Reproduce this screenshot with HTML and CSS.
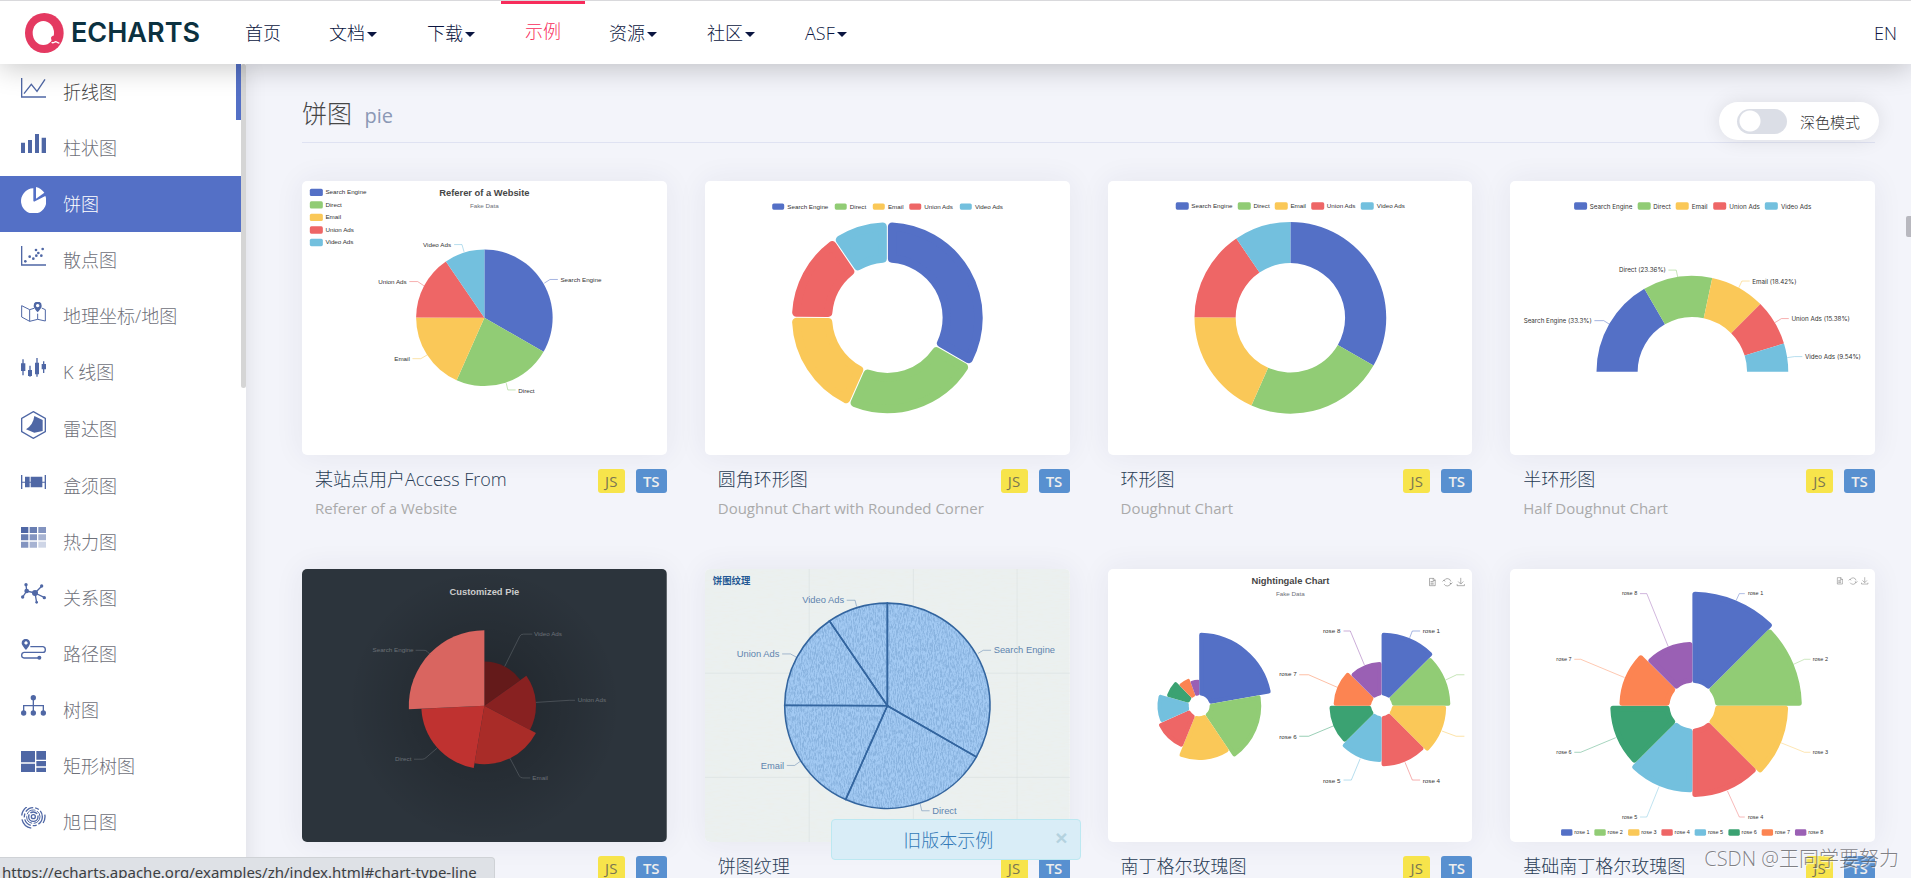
FILE: index.html
```html
<!DOCTYPE html>
<html lang="zh">
<head>
<meta charset="utf-8">
<title>Examples - Apache ECharts</title>
<link rel="stylesheet" href="styles.css">
</head>
<body>
<header class="topbar">
  <a class="logo" href="#" aria-label="ECharts">
    <svg class="logo-mark" viewBox="0 0 117 120" aria-hidden="true">
      <ellipse cx="58" cy="60" rx="58" ry="60" fill="#e43961"/>
      <ellipse cx="55" cy="60" rx="32" ry="36" fill="#fff"/>
      <path d="M78 74c4-8 12-7 15 0 1 4-1 6 3 7 5 1 6 4 10 6l-3 4c-5-4-9 1-14-3-5-3-10-2-11-14z" fill="#e43961"/>
      <path d="M80 88c4 4 8-1 12-2 4 0 5 4 11 4" fill="none" stroke="#fff" stroke-width="4"/>
      <circle cx="86" cy="78" r="5" fill="#e43961"/>
    </svg>
    <span class="logo-text">ECHARTS</span>
  </a>
  <nav class="menu">
    <a href="#">首页</a>
    <a href="#">文档<i class="caret"></i></a>
    <a href="#">下载<i class="caret"></i></a>
    <a href="#" class="active">示例</a>
    <a href="#">资源<i class="caret"></i></a>
    <a href="#">社区<i class="caret"></i></a>
    <a href="#">ASF<i class="caret"></i></a>
  </nav>
  <a class="lang" href="#">EN</a>
</header>

<div class="layout">
  <aside class="sidebar">
    <nav class="chart-types">
      <a class="hovered" href="#chart-type-line"><svg viewBox="0 0 75 60"><path d="M2 0v57h73M9 47l22-28 17 21L72 4" class="ln"/></svg>折线图</a>
      <a href="#chart-type-bar"><svg viewBox="0 0 75 58"><path d="M0 26h12v32H0zM21 18h12v40H21zM42 0h12v58H42zM62 11h13v47H62z"/></svg>柱状图</a>
      <a class="current" href="#chart-type-pie"><svg viewBox="0 0 75 78"><path d="M37 4v37l2 3 34-17a38 38 0 1 1-36-23z"/><path d="M45 0v35l25-18Q60 4 45 0z"/></svg>饼图</a>
      <a href="#chart-type-scatter"><svg viewBox="0 0 75 60"><path d="M2 0v57h73" class="ln"/><circle cx="13" cy="46" r="4"/><circle cx="26" cy="32" r="4"/><circle cx="37" cy="38" r="4"/><circle cx="45" cy="12" r="4"/><circle cx="52" cy="21" r="4"/><circle cx="46" cy="29" r="4"/><circle cx="61" cy="29" r="4"/><circle cx="65" cy="9" r="4"/></svg>散点图</a>
      <a href="#chart-type-geo"><svg viewBox="0 0 75 60"><path d="M39 19L26 23 2 11v34l24 13 24-6 23 5V23l-11-5M26 23v35M50 35v17" class="ln thin"/><path fill-rule="evenodd" d="M50 31C39 19 38 14 38 11a12 12 0 0 1 24 0c0 3-1 8-12 20zM50 6a5 5 0 1 0 .1 0z"/></svg>地理坐标/地图</a>
      <a href="#chart-type-candlestick"><svg viewBox="0 0 75 56"><path d="M0 16h13v23H0zM21 36h12v18H21zM42 14h12v35H42zM62 18h13v16H62z"/><path d="M6 4v48M27 23v33M48 0v56M68 10v35" class="ln"/></svg>K 线图</a>
      <a class="tall" href="#chart-type-radar"><svg viewBox="0 0 75 84"><path d="M37 2l36 20v40L37 82 2 62V22z" class="ln"/><path d="M40 15l25 12v33l-25 5-25-10q22-14 25-40z"/></svg>雷达图</a>
      <a href="#chart-type-boxplot"><svg viewBox="0 0 75 42"><path d="M0 0h4v42H0zM71 0h4v42h-4zM12 5h14v32H12zM29 5h35v32H29zM0 20h75v3H0z"/></svg>盒须图</a>
      <a href="#chart-type-heatmap"><svg viewBox="0 0 75 63"><path d="M0 0h22v18H0z"/><path d="M26 0h22v18H26zM0 22h22v18H0z" opacity=".85"/><path d="M52 0h23v18H52zM26 22h22v18H26zM0 44h22v18H0z" opacity=".7"/><path d="M52 22h23v18H52zM26 44h22v18H26z" opacity=".5"/><path d="M52 44h23v18H52z" opacity=".28"/></svg>热力图</a>
      <a href="#chart-type-graph"><svg viewBox="0 0 75 63"><path d="M5 42l12-18-2-20M17 24l25 6 20-20M42 30l29 14M42 30l5 29" class="ln"/><circle cx="17" cy="24" r="7"/><circle cx="42" cy="30" r="9"/><circle cx="5" cy="42" r="5"/><circle cx="15" cy="5" r="5"/><circle cx="62" cy="9" r="5"/><circle cx="70" cy="44" r="5"/><circle cx="47" cy="58" r="4"/></svg>关系图</a>
      <a href="#chart-type-lines"><svg viewBox="0 0 75 63"><path d="M28 23h38q7 1 7 9t-7 8H9q-7 1-7 9t7 8h46" class="ln"/><path fill-rule="evenodd" d="M15 33C3 19 2 15 2 12a12.500 12.500 0 0 1 25 0c0 3-1 8-12 21zM15 7a5 5 0 1 0 .1 0z"/><circle cx="55" cy="56" r="6"/></svg>路径图</a>
      <a href="#chart-type-tree"><svg viewBox="0 0 75 63"><path d="M8 54V32h59v22M37 8v46" class="ln"/><circle cx="37" cy="8" r="8"/><circle cx="8" cy="54" r="8"/><circle cx="37" cy="54" r="8"/><circle cx="67" cy="54" r="8"/></svg>树图</a>
      <a href="#chart-type-treemap"><svg viewBox="0 0 75 63"><path d="M0 0h42v34H0zM46 0h29v26H46zM0 38h42v25H0zM46 30h29v16H46zM46 50h29v13H46z"/></svg>矩形树图</a>
      <a href="#chart-type-sunburst"><svg viewBox="0 0 75 66"><circle cx="37" cy="29" r="6" class="ln"/><circle cx="37" cy="29" r="14" class="ln" stroke-dasharray="50 5 22 5"/><circle cx="37" cy="29" r="20" class="ln thin" stroke-dasharray="30 5"/><circle cx="37" cy="29" r="27" class="ln" stroke-dasharray="26 6 12 6"/><circle cx="37" cy="29" r="35" class="ln" stroke-dasharray="20 11 0 30 40 12 30 8"/></svg>旭日图</a>
    </nav>
    <div class="side-scroll"></div>
  </aside>

  <main class="content">
    <div class="section-head">
      <h1>饼图 <small>pie</small></h1>
      <label class="dark-mode"><input type="checkbox" class="switch"><span>深色模式</span></label>
    </div>

    <div class="grid">
      <article class="card">
        <a class="thumb" href="#pie-simple"><svg viewBox="0 0 700 525">
          <g data-cx="350" data-cy="262.5" data-r="131" data-values="1048,735,580,484,300"></g>
          <g class="legend"><rect x="15" y="15" fill="#5470c6"/><rect x="15" y="39" fill="#91cc75"/><rect x="15" y="63" fill="#fac858"/><rect x="15" y="87" fill="#ee6666"/><rect x="15" y="111" fill="#73c0de"/>
          <text x="45" y="25">Search Engine</text><text x="45" y="49">Direct</text><text x="45" y="73">Email</text><text x="45" y="97">Union Ads</text><text x="45" y="121">Video Ads</text></g>
          <text class="t" x="350" y="29">Referer of a Website</text><text class="s" x="350" y="52">Fake Data</text>
          <g class="lead"><path stroke="#5470c6" d="M465 196l11-7h15"/><path stroke="#91cc75" d="M392 388l3 13h15"/><path stroke="#fac858" d="M240 334l-12 7h-16"/><path stroke="#ee6666" d="M234 201l-12-8h-16"/><path stroke="#73c0de" d="M311 136l-4-14h-15"/></g>
          <text x="496" y="193">Search Engine</text><text x="415" y="406">Direct</text><text class="e" x="207" y="346">Email</text><text class="e" x="201" y="197">Union Ads</text><text class="e" x="286" y="126">Video Ads</text>
        </svg></a>
        <div class="info"><h2>某站点用户Access From</h2><span class="js">JS</span><span class="ts">TS</span><p>Referer of a Website</p></div>
      </article>

      <article class="card">
        <a class="thumb" href="#pie-borderRadius"><svg viewBox="0 0 700 525">
          <g data-cx="350" data-cy="262.5" data-r="184" data-inner="105" data-round="8" data-gap="1" data-values="1048,735,580,484,300"></g>
          <g class="legend small"><rect x="129" y="43" fill="#5470c6"/><rect x="249" y="43" fill="#91cc75"/><rect x="322" y="43" fill="#fac858"/><rect x="392" y="43" fill="#ee6666"/><rect x="489" y="43" fill="#73c0de"/>
          <text x="158" y="53">Search Engine</text><text x="278" y="53">Direct</text><text x="351" y="53">Email</text><text x="421" y="53">Union Ads</text><text x="518" y="53">Video Ads</text></g>
        </svg></a>
        <div class="info"><h2>圆角环形图</h2><span class="js">JS</span><span class="ts">TS</span><p>Doughnut Chart with Rounded Corner</p></div>
      </article>

      <article class="card">
        <a class="thumb" href="#pie-doughnut"><svg viewBox="0 0 700 525">
          <g data-cx="350" data-cy="262.5" data-r="184" data-inner="105" data-values="1048,735,580,484,300"></g>
          <g class="legend"><rect x="130" y="41" fill="#5470c6"/><rect x="249" y="41" fill="#91cc75"/><rect x="320" y="41" fill="#fac858"/><rect x="390" y="41" fill="#ee6666"/><rect x="485" y="41" fill="#73c0de"/>
          <text x="160" y="52">Search Engine</text><text x="279" y="52">Direct</text><text x="350" y="52">Email</text><text x="420" y="52">Union Ads</text><text x="516" y="52">Video Ads</text></g>
        </svg></a>
        <div class="info"><h2>环形图</h2><span class="js">JS</span><span class="ts">TS</span><p>Doughnut Chart</p></div>
      </article>

      <article class="card">
        <a class="thumb" href="#pie-half-donut"><svg class="inter" viewBox="0 0 700 525">
          <g data-cx="350" data-cy="366" data-r="184" data-inner="105" data-start="270" data-sweep="180" data-values="1048,735,580,484,300"></g>
          <g class="legend"><rect x="123" y="41" fill="#5470c6"/><rect x="245" y="41" fill="#91cc75"/><rect x="318" y="41" fill="#fac858"/><rect x="390" y="41" fill="#ee6666"/><rect x="489" y="41" fill="#73c0de"/>
          <text x="153" y="53">Search Engine</text><text x="275" y="53">Direct</text><text x="349" y="53">Email</text><text x="421" y="53">Union Ads</text><text x="520" y="53">Video Ads</text></g>
          <g class="lead"><path stroke="#5470c6" d="M191 275l-11-7h-18"/><path stroke="#91cc75" d="M322 185l-3-14h-15"/><path stroke="#fac858" d="M439 205l6-13h15"/><path stroke="#ee6666" d="M508 272l13-8h14"/><path stroke="#73c0de" d="M532 339l14-2h15"/></g>
          <text class="e" x="157" y="273">Search Engine (33.3%)</text><text class="e" x="299" y="175">Direct (23.36%)</text><text x="465" y="197">Email (18.42%)</text><text x="540" y="268">Union Ads (15.38%)</text><text x="566" y="341">Video Ads (9.54%)</text>
        </svg></a>
        <div class="info"><h2>半环形图</h2><span class="js">JS</span><span class="ts">TS</span><p>Half Doughnut Chart</p></div>
      </article>

      <article class="card">
        <a class="thumb" href="#pie-custom"><svg class="dark" viewBox="0 0 700 525">
          <defs><radialGradient id="glow" gradientUnits="userSpaceOnUse" cx="350" cy="262" r="262"><stop offset=".3" stop-color="#000" stop-opacity=".2"/><stop offset="1" stop-color="#000" stop-opacity="0"/></radialGradient></defs>
          <rect width="700" height="525" fill="#2c343c"/><rect width="700" height="525" fill="url(#glow)"/>
          <g data-cx="350" data-cy="262.5" data-radii="85,99,112,121,145" data-values="235,274,310,335,400" data-colors="#641a1a,#882121,#a92c28,#bf3230,#d96560"></g>
          <text class="t" x="350" y="49">Customized Pie</text>
          <g class="lead"><path d="M389 187l29-58q2-4 7-4h17"/><path d="M449 256l64-4h11"/><path d="M399 363l18 34q2 4 7 4h14"/><path d="M259 344l-21 18q-3 3-7 3h-16"/><path d="M246 164l-6-6q-2-2-6-2h-16"/></g>
          <text x="445" y="129">Video Ads</text><text x="529" y="256">Union Ads</text><text x="442" y="404">Email</text><text class="e" x="210" y="369">Direct</text><text class="e" x="214" y="159">Search Engine</text>
        </svg></a>
        <div class="info"><h2></h2><span class="js">JS</span><span class="ts">TS</span></div>
      </article>

      <article class="card">
        <a class="thumb" href="#pie-pattern"><svg class="paper" viewBox="0 0 700 525">
          <defs>
            <filter id="weave" x="0" y="0" width="1" height="1"><feTurbulence type="fractalNoise" baseFrequency=".45 .12" numOctaves="4" seed="4"/><feColorMatrix values="0 0 0 0 .25  0 0 0 0 .45  0 0 0 0 .74  3 2 0 0 -2.1"/><feComposite in2="SourceGraphic" operator="in"/></filter>
            <filter id="linen" x="0" y="0" width="1" height="1"><feTurbulence type="fractalNoise" baseFrequency=".06 .3" numOctaves="3" seed="9"/><feColorMatrix values="0 0 0 0 .84  0 0 0 0 .86  0 0 0 0 .82  1.2 0 0 0 -.4"/></filter>
          </defs>
          <rect width="700" height="525" fill="#ebf0f0"/><rect width="700" height="525" filter="url(#linen)"/>
          <path d="M0 200h700M0 400h700M200 0v525M400 0v525M599 0v525" stroke="#d6dede" fill="none"/>
          <circle cx="350" cy="262" r="197" fill="#a3caf3"/><circle cx="350" cy="262" r="197" filter="url(#weave)"/>
          <g class="outlined" data-cx="350" data-cy="262.5" data-r="197" data-values="1048,735,580,484,300"></g>
          <text class="cn" x="15" y="29">饼图纹理</text>
          <g class="lead"><path d="M524 162l10-6h15"/><path d="M413 451l3 13h15"/><path d="M183 369l-11 8h-15"/><path d="M175 169l-11-6h-16"/><path d="M291 72l-3-12h-16"/></g>
          <text x="554" y="162">Search Engine</text><text x="436" y="470">Direct</text><text class="e" x="152" y="383">Email</text><text class="e" x="143" y="169">Union Ads</text><text class="e" x="267" y="65">Video Ads</text>
        </svg></a>
        <div class="info"><h2>饼图纹理</h2><span class="js">JS</span><span class="ts">TS</span></div>
      </article>

      <article class="card">
        <a class="thumb" href="#pie-roseType"><svg viewBox="0 0 700 525">
          <defs><g id="tools"><path d="M1 1h8l3 3v11H1zM8 1v4h4M3 7h6M3 10h6M3 12h6"/><path d="M29 5a7 7 0 0 1 13 2M42 10a7 7 0 0 1-13 2M26 7l3-3 2 3M45 9l-3 3-2-3"/><path d="M61 0v11M56 7l5 5 5-5M54 12v3h14v-3"/></g></defs>
          <g data-cx="175" data-cy="262.5" data-inner="20" data-round="4" data-radii="140,119,104,86,80,65,56,50" data-values="40,33,28,22,20,15,12,10"></g>
          <g data-cx="525" data-cy="262.5" data-inner="20" data-round="4" data-radii="140,132,124,116,108,100,92,84" data-values="1,1,1,1,1,1,1,1"></g>
          <text class="t" x="350" y="29">Nightingale Chart</text><text class="s" x="350" y="52">Fake Data</text>
          <use href="#tools" class="tool" x="616" y="17"/>
          <g class="lead"><path stroke="#5470c6" d="M579 132l5-13h15"/><path stroke="#91cc75" d="M648 213l21-10h15"/><path stroke="#fac858" d="M641 311l27 10h16"/><path stroke="#ee6666" d="M570 371l14 34h15"/><path stroke="#73c0de" d="M484 364l-17 41h-15"/><path stroke="#3ba272" d="M433 301l-48 20h-18"/><path stroke="#fc8452" d="M440 227l-55-24h-18"/><path stroke="#9a60b4" d="M492 184l-27-65h-13"/></g>
          <text x="604" y="123">rose 1</text><text x="604" y="410">rose 4</text><text class="e" x="446" y="410">rose 5</text><text class="e" x="362" y="326">rose 6</text><text class="e" x="362" y="206">rose 7</text><text class="e" x="446" y="123">rose 8</text>
        </svg></a>
        <div class="info"><h2>南丁格尔玫瑰图</h2><span class="js">JS</span><span class="ts">TS</span></div>
      </article>

      <article class="card">
        <a class="thumb" href="#pie-roseType-simple"><svg viewBox="0 0 800 600">
          <g data-cx="400" data-cy="300" data-inner="50" data-round="6" data-radii="250,240,210,200,190,180,160,140" data-values="1,1,1,1,1,1,1,1"></g>
          <use href="#tools" class="tool" x="717" y="18"/>
          <g class="lead"><path stroke="#5470c6" d="M496 69l7-15h12"/><path stroke="#91cc75" d="M622 209l24-11h13"/><path stroke="#fac858" d="M594 381l52 21h13"/><path stroke="#ee6666" d="M477 487l26 57h12"/><path stroke="#73c0de" d="M327 477l-27 67h-15"/><path stroke="#3ba272" d="M232 370l-77 32h-14"/><path stroke="#fc8452" d="M251 238l-96-40h-14"/><path stroke="#9a60b4" d="M347 170L300 54h-15"/></g>
          <text x="522" y="58">rose 1</text><text x="664" y="202">rose 2</text><text x="664" y="406">rose 3</text><text x="522" y="548">rose 4</text><text class="e" x="279" y="548">rose 5</text><text class="e" x="135" y="406">rose 6</text><text class="e" x="135" y="202">rose 7</text><text class="e" x="279" y="58">rose 8</text>
          <g class="legend"><rect x="112" y="571" fill="#5470c6"/><rect x="185" y="571" fill="#91cc75"/><rect x="259" y="571" fill="#fac858"/><rect x="332" y="571" fill="#ee6666"/><rect x="405" y="571" fill="#73c0de"/><rect x="479" y="571" fill="#3ba272"/><rect x="552" y="571" fill="#fc8452"/><rect x="625" y="571" fill="#9a60b4"/>
          <text x="141" y="582">rose 1</text><text x="214" y="582">rose 2</text><text x="288" y="582">rose 3</text><text x="361" y="582">rose 4</text><text x="434" y="582">rose 5</text><text x="508" y="582">rose 6</text><text x="581" y="582">rose 7</text><text x="654" y="582">rose 8</text></g>
        </svg></a>
        <div class="info"><h2>基础南丁格尔玫瑰图</h2><span class="js">JS</span><span class="ts">TS</span></div>
      </article>
    </div>
  </main>
</div>

<div class="page-scroll"></div>
<div class="notice"><a href="#">旧版本示例</a><button type="button" aria-label="关闭">×</button></div>
<div class="status">https://echarts.apache.org/examples/zh/index.html#chart-type-line</div>
<div class="watermark">CSDN @王同学要努力</div>
<script src="charts.js"></script>
</body>
</html>
```
FILE: styles.css
```css
* { box-sizing: border-box; }

body {
  margin: 0;
  height: 100vh;
  overflow: hidden;
  display: flex;
  flex-direction: column;
  background: #f3f4fa;
  color: #464646;
  font-family: "Open Sans", "Noto Sans CJK SC", sans-serif;
  font-size: 18px;
  font-weight: 300;
}

a { color: inherit; text-decoration: none; }

/* Top bar */
.topbar {
  position: relative;
  z-index: 2;
  flex: none;
  display: flex;
  align-items: stretch;
  height: 64px;
  padding: 0 14px 0 25px;
  border-top: 1px solid #d9d9dc;
  background: #fff;
  box-shadow: 0 4px 28px rgba(0, 0, 0, .22);
}
.logo { display: flex; align-items: center; width: 196px; gap: 7px; }
.logo-mark { width: 39px; height: 40px; }
.logo-text { color: #0b3140; font: 600 27px/40px Inter, sans-serif; }
.menu { display: flex; flex: 1; color: #0a1540; }
.menu a { display: flex; align-items: center; padding: 0 24px; line-height: 26px; }
.menu .active { border-top: 3px solid #f72c5b; padding-bottom: 7px; color: #f72c5b; }
.caret {
  margin: 3px 2px 0;
  border: 5px solid transparent;
  border-top-color: #0a1540;
  border-bottom: 0;
}
.lang { display: flex; align-items: center; color: #0a1540; }

.layout { flex: 1; display: flex; min-height: 0; }

/* Side bar */
.sidebar {
  position: relative;
  flex: none;
  width: 246px;
  background: #fff;
  box-shadow: 0 0 20px rgba(0, 0, 0, .1);
  overflow: hidden;
  overflow: clip;
  overflow-clip-margin: 20px;
}
.chart-types { margin-right: 5px; color: #6e7079; }
.chart-types a {
  display: flex;
  align-items: center;
  gap: 17px;
  height: 56px;
  padding: 0 0 3px 21px;
}
.chart-types .tall { height: 58px; }
.chart-types svg { width: 25px; margin-bottom: 6px; fill: #4f67a5; color: #4f67a5; }
.chart-types .ln { fill: none; stroke: currentColor; stroke-width: 4; }
.chart-types .thin { stroke-width: 3; }
.chart-types .hovered { color: #464646; border-right: 5px solid #5470c6; }
.chart-types .current { background: #5470c6; color: #fff; }
.chart-types .current svg { fill: #fff; }
.side-scroll {
  position: absolute;
  top: 0;
  right: 0;
  width: 5px;
  height: 324px;
  border-radius: 3px;
  background: #d5d5d5;
}

/* Content */
.content { flex: 1; min-width: 0; padding: 0 36px 0 56px; }
.section-head {
  display: flex;
  align-items: flex-end;
  justify-content: space-between;
  height: 79px;
  border-bottom: 1px solid #dfe2f2;
}
h1 { margin: 0 0 6px; font-size: 25px; line-height: 40px; font-weight: 300; }
h1 small { margin-left: 6px; font-size: 20px; font-weight: 400; color: #8b98b5; }
.dark-mode {
  display: flex;
  align-items: center;
  gap: 13px;
  height: 38px;
  margin: 0 -4px 2px 0;
  padding: 0 19px 0 18px;
  border-radius: 19px;
  background: #fff;
  box-shadow: 0 0 20px rgba(0, 0, 0, .1);
  color: #333;
  font-size: 15px;
}
.switch {
  appearance: none;
  width: 50px;
  height: 25px;
  margin: 0;
  border-radius: 13px;
  background: radial-gradient(circle at 13px 12px, #fff 10px, #dbdee6 11px);
}
.grid {
  display: grid;
  grid-template-columns: repeat(4, minmax(0, 1fr));
  gap: 51px 38px;
  padding-top: 38px;
}
.thumb {
  display: block;
  overflow: hidden;
  border-radius: 5px;
  background: #fff;
  box-shadow: 0 0 30px rgba(40, 40, 80, .07);
}
.thumb svg {
  display: block;
  width: 100%;
  font-family: "Liberation Sans", "Noto Sans CJK SC", sans-serif;
  font-size: 12px;
  font-weight: 400;
  fill: #333;
}
.thumb .inter { font-family: Inter, sans-serif; }
.thumb .t { font-size: 18px; font-weight: 700; text-anchor: middle; fill: #464646; }
.thumb .s { text-anchor: middle; fill: #6e7079; }
.thumb .e { text-anchor: end; }
.thumb .lead { fill: none; }
.thumb .legend rect { width: 25px; height: 14px; rx: 3px; }
.thumb .small rect { width: 23px; height: 12px; }
.thumb .tool { fill: none; stroke: #666; }
.thumb .dark { fill: #6b7177; }
.thumb .dark .t { fill: #ccc; }
.thumb .dark .lead { stroke: #686e74; }
.thumb .paper { font-size: 18px; fill: #5f84ae; }
.thumb .paper .lead { stroke: #5f84ae; }
.thumb .paper .cn { font-weight: 700; fill: #235894; }
.thumb .outlined { fill: none; stroke: #33659f; stroke-width: 3; }

.info {
  display: grid;
  grid-template-columns: 1fr auto auto;
  column-gap: 11px;
  row-gap: 5px;
  min-height: 63px;
  align-content: start;
  padding: 14px 0 0 13px;
}
.info h2 { margin: 0; font-size: 18px; line-height: 20px; font-weight: 300; color: #293c55; }
.info p { grid-column: 1 / -1; margin: 0; font-size: 15px; line-height: 20px; font-weight: 400; color: #aaa; }
.js, .ts { border-radius: 3px; font-size: 15px; line-height: 24px; font-weight: 400; text-align: center; }
.js { width: 27px; background: #f7e44b; color: #7a7652; }
.ts { width: 31px; background: #5890d0; color: #eee; font-weight: 600; }

/* Overlays */
.page-scroll {
  position: absolute;
  top: 216px;
  right: 0;
  width: 5px;
  height: 21px;
  border-radius: 2px 0 0 2px;
  background: #b8b8bf;
}
.notice {
  position: absolute;
  z-index: 3;
  bottom: 18px;
  left: 50%;
  margin-left: -125px;
  display: flex;
  align-items: center;
  width: 250px;
  height: 41px;
  padding: 0 12px 2px 10px;
  border: 1px solid #bce8f1;
  border-radius: 4px;
  background: #d9edf7;
  color: #337ab7;
}
.notice a { flex: 1; text-align: center; }
.notice button {
  padding: 0 0 2px;
  border: 0;
  background: none;
  color: #b4d2df;
  font: 700 21px/21px "Liberation Sans", sans-serif;
}
.status {
  position: absolute;
  z-index: 3;
  left: 0;
  bottom: -6px;
  height: 27px;
  padding: 1px 17px 0 2px;
  border: 1px solid #cfd2d6;
  border-left: 0;
  border-radius: 0 4px 0 0;
  background: #dee1e6;
  color: #3c4043;
  font: 400 15px/27px "Noto Sans", sans-serif;
}
.watermark {
  position: absolute;
  z-index: 3;
  right: 12px;
  bottom: 6px;
  color: rgba(90, 90, 95, .75);
  font-size: 20px;
  line-height: 26px;
  text-shadow: 1px 1px 1px rgba(255, 255, 255, .8);
}
```
FILE: charts.js
```js
// Fills every <g data-values> with the sectors of a pie, doughnut or rose.
const PALETTE = ['#5470c6', '#91cc75', '#fac858', '#ee6666', '#73c0de', '#3ba272', '#fc8452', '#9a60b4'];
const rad = deg => deg * Math.PI / 180;

document.querySelectorAll('g[data-values]').forEach(group => {
  const d = group.dataset;
  const values = d.values.split(',').map(Number);
  const total = values.reduce((a, b) => a + b, 0);
  const radii = d.radii ? d.radii.split(',').map(Number) : values.map(() => Number(d.r));
  const colors = d.colors ? d.colors.split(',') : PALETTE;
  const cx = Number(d.cx), cy = Number(d.cy), inner = Number(d.inner || 0);
  const round = Number(d.round || 0), gap = Number(d.gap || 0);
  const point = (r, a) => (cx + r * Math.sin(a)).toFixed(2) + ' ' + (cy - r * Math.cos(a)).toFixed(2);
  let angle = rad(Number(d.start || 0));

  values.forEach((value, i) => {
    const span = rad(Number(d.sweep || 360)) * value / total;
    const end = angle + span;
    // The stroke adds the rounded corner back, so the shape is inset by its radius.
    const k = Math.min(round, inner ? inner * span / 3 : round);
    const inset = k + gap;
    const ro = radii[i] - inset, ri = inner ? inner + inset : 0;
    const ao = Math.asin(inset / ro), ai = ri ? Math.asin(inset / ri) : 0;
    const large = span > Math.PI ? 1 : 0;
    let path = `M${point(ri, angle + ai)}L${point(ro, angle + ao)}A${ro} ${ro} 0 ${large} 1 ${point(ro, end - ao)}L${point(ri, end - ai)}`;
    if (ri) path += `A${ri} ${ri} 0 ${large} 0 ${point(ri, angle + ai)}`;
    const el = document.createElementNS('http://www.w3.org/2000/svg', 'path');
    el.setAttribute('d', path + 'Z');
    if (!group.classList.contains('outlined')) {
      el.setAttribute('fill', colors[i]);
      if (k) {
        el.setAttribute('stroke', colors[i]);
        el.setAttribute('stroke-width', 2 * k);
        el.setAttribute('stroke-linejoin', 'round');
      }
    }
    group.appendChild(el);
    angle = end;
  });
});
```
